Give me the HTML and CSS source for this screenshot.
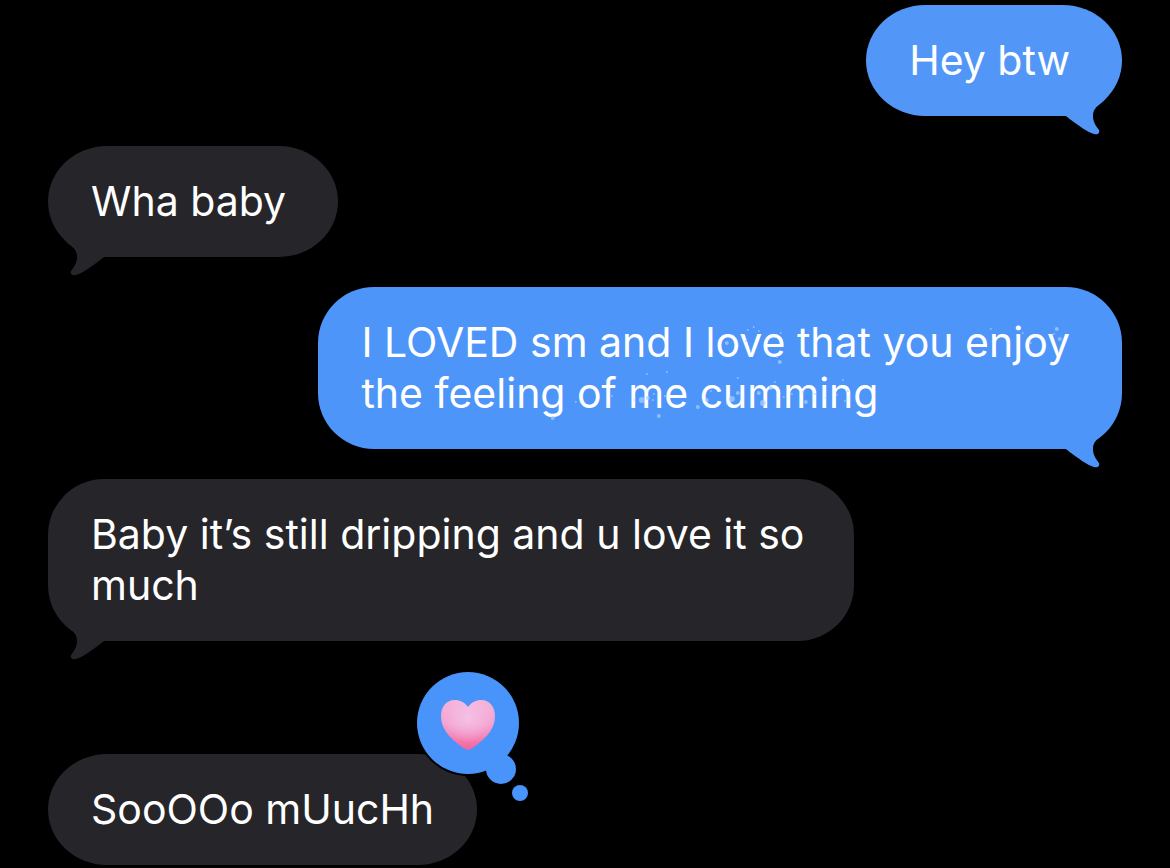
FILE: index.html
```html
<!DOCTYPE html>
<html lang="en">
<head>
    <meta charset="UTF-8">
    <meta name="viewport" content="width=device-width, initial-scale=1.0">
    <title>Messages</title>
    <link rel="stylesheet" href="styles.css">
</head>
<body>
    <!-- shared tail shape, mirrored for received messages -->
    <svg class="defs" width="0" height="0" aria-hidden="true">
        <symbol id="tail" viewBox="0 0 60 46">
            <path d="M11 25 C16 25 17 27 21 30 C28 35 37 42 44 44 C48 45 50 43 49 40 C46 36 43 32 43 26 C43 20 46 17 50 14 C52 12 54 11 56 8 L40 0 L10 20 Z"/>
        </symbol>
    </svg>

    <main class="chat">
        <div class="message sent first">
            <p>Hey btw</p>
            <svg class="tail" aria-hidden="true"><use href="#tail"/></svg>
        </div>

        <div class="message received">
            <p>Wha baby</p>
            <svg class="tail" aria-hidden="true"><use href="#tail"/></svg>
        </div>

        <div class="message sent long">
            <p>I LOVED sm and I love that you enjoy<br>the feeling of me cumming</p>
            <svg class="tail" aria-hidden="true"><use href="#tail"/></svg>
            <!-- leftover specks of the ink effect -->
            <svg class="specks" viewBox="0 0 802 162" aria-hidden="true">
                <circle cx="429" cy="43" r="1"/><circle cx="435" cy="40" r="1"/><circle cx="440" cy="44" r="1"/>
                <circle cx="408" cy="56" r="2"/><circle cx="461" cy="75" r="2"/><circle cx="458" cy="70" r="1"/>
                <circle cx="427" cy="54" r="1"/><circle cx="462" cy="46" r="1"/>
                <circle cx="704" cy="46" r="1"/><circle cx="738" cy="42" r="2"/><circle cx="741" cy="52" r="2"/>
                <circle cx="735" cy="47" r="1"/><circle cx="712" cy="56" r="1"/><circle cx="672" cy="42" r="1"/>
                <circle cx="234" cy="131" r="2"/><circle cx="257" cy="115" r="1"/><circle cx="293" cy="109" r="1"/>
                <circle cx="340" cy="129" r="2"/><circle cx="348" cy="85" r="1"/><circle cx="328" cy="87" r="1"/>
                <circle cx="316" cy="113" r="1"/><circle cx="323" cy="113" r="3"/><circle cx="329" cy="111" r="2"/>
                <circle cx="335" cy="107" r="1"/><circle cx="334" cy="113" r="1"/><circle cx="346" cy="109" r="1"/>
                <circle cx="379" cy="120" r="2"/><circle cx="388" cy="113" r="2"/><circle cx="392" cy="104" r="1"/>
                <circle cx="413" cy="112" r="3"/><circle cx="419" cy="106" r="2"/><circle cx="408" cy="117" r="1"/>
                <circle cx="419" cy="91" r="1"/><circle cx="440" cy="106" r="2"/><circle cx="444" cy="116" r="3"/>
                <circle cx="452" cy="101" r="2"/><circle cx="456" cy="95" r="1"/><circle cx="465" cy="110" r="1"/>
                <circle cx="473" cy="107" r="1"/><circle cx="484" cy="105" r="1"/><circle cx="487" cy="115" r="2"/>
                <circle cx="496" cy="107" r="1"/><circle cx="507" cy="111" r="1"/><circle cx="518" cy="108" r="1"/>
                <circle cx="524" cy="93" r="1"/><circle cx="529" cy="104" r="1"/><circle cx="526" cy="114" r="1"/>
            </svg>
        </div>

        <div class="message received long">
            <p>Baby it’s still dripping and u love it so much</p>
            <svg class="tail" aria-hidden="true"><use href="#tail"/></svg>
        </div>

        <div class="message received reacted">
            <p>SooOOo mUucHh</p>
            <svg class="reaction" viewBox="0 0 116 134" role="img" aria-label="Heart reaction">
                <defs>
                    <linearGradient id="heart-fill" x1="0" y1="0" x2="0" y2="1">
                        <stop offset="0" stop-color="#f5b3d9"/>
                        <stop offset="0.5" stop-color="#f3a0cf"/>
                        <stop offset="1" stop-color="#f4639d"/>
                    </linearGradient>
                    <radialGradient id="heart-shine" cx="0.5" cy="0.36" r="0.5">
                        <stop offset="0" stop-color="#f5c4e6" stop-opacity="0.9"/>
                        <stop offset="1" stop-color="#f5c4e6" stop-opacity="0"/>
                    </radialGradient>
                </defs>
                <circle cx="54" cy="54" r="53"/>
                <g class="thought">
                    <circle cx="54" cy="54" r="51"/>
                    <circle cx="87" cy="100" r="15"/>
                    <circle cx="106" cy="124" r="8"/>
                </g>
                <path fill="url(#heart-fill)" d="M54 38 C50 33 46 31 41 31 C32 31 27 38 27 47 C27 63 41 73 51 80 C53 81 55 81 57 80 C67 73 81 63 81 47 C81 38 76 31 67 31 C62 31 58 33 54 38 Z"/>
                <path fill="url(#heart-shine)" d="M54 38 C50 33 46 31 41 31 C32 31 27 38 27 47 C27 63 41 73 51 80 C53 81 55 81 57 80 C67 73 81 63 81 47 C81 38 76 31 67 31 C62 31 58 33 54 38 Z"/>
            </svg>
        </div>
    </main>
</body>
</html>
```

FILE: styles.css
```css
* {
    box-sizing: border-box;
}
body {
    margin: 0;
    background-color: #000;
    color: #fff;
    font-family: Inter, Roboto, sans-serif;
    font-size: 41px;
    line-height: 51px;
}
.defs {
    position: absolute;
}
.chat {
    display: flex;
    flex-direction: column;
    gap: 30px;
    padding: 5px 48px 3px;
}
.message {
    position: relative;
    max-width: 75%;
    padding: 30px 52px 30px 43px;
    border-radius: 64px / 60px;
}
.message.long {
    border-radius: 56px;
}
.message p {
    margin: 0;
}
.sent {
    align-self: flex-end;
    max-width: 80%;
    background-color: #4d95f9;
    fill: #4d95f9;
}
.sent.first {
    background-color: #5297f7;
    fill: #5297f7;
}
.received {
    align-self: flex-start;
    background-color: #26252a;
    fill: #26252a;
}
.tail {
    position: absolute;
    right: 12px;
    bottom: -20px;
    width: 60px;
    height: 46px;
}
.received .tail {
    right: auto;
    left: 12px;
    transform: scaleX(-1);
}
.specks {
    position: absolute;
    top: 0;
    left: 0;
    width: 100%;
    height: 100%;
    fill: #a9d0ff;
    opacity: 0.7;
}
.received.long,
.reacted {
    padding-right: 43px;
}
.reacted {
    margin-top: 83px;
}
.reaction {
    position: absolute;
    top: -85px;
    right: -53px;
    width: 116px;
    height: 134px;
    fill: #000;
}
.thought {
    fill: #4894fb;
}
```
